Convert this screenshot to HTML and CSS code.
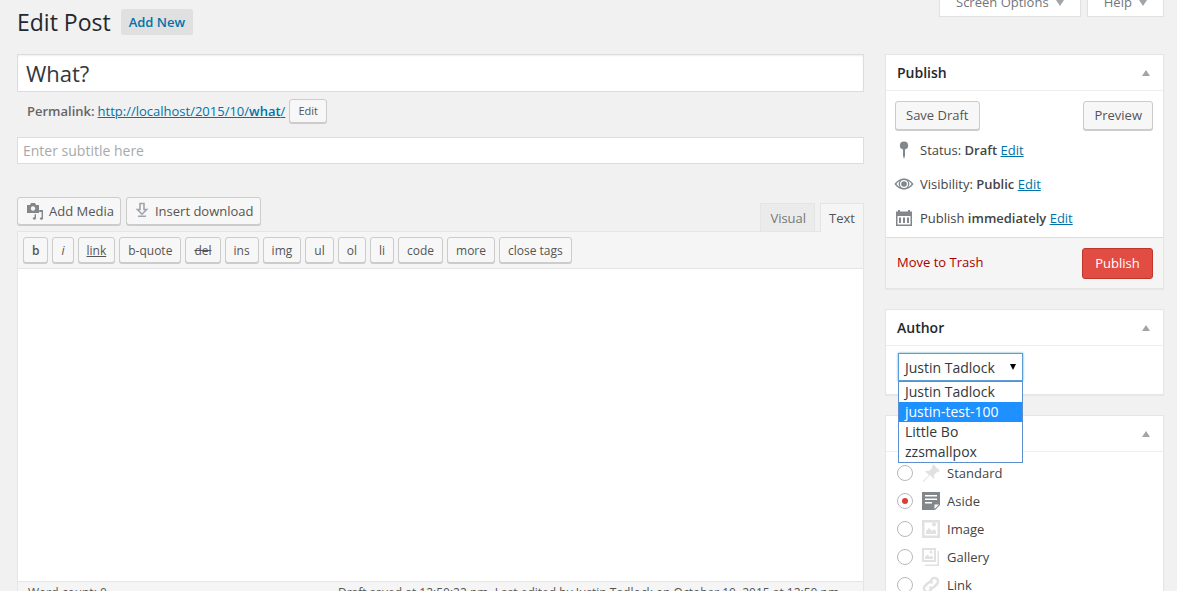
FILE: index.html
```html
<!DOCTYPE html>
<html lang="en">
  <head>
    <meta charset="UTF-8" />
    <title>Edit Post</title>
    <link rel="stylesheet" href="styles.css">
  </head>
  <body>
    <div class="screen-meta">
      <a class="meta-tab meta-tab-options" href="#">Screen Options <span class="meta-arrow"></span></a>
      <a class="meta-tab meta-tab-help" href="#">Help <span class="meta-arrow"></span></a>
    </div>
    <div class="page-head">
      <h1>Edit Post</h1>
      <a class="add-new" href="#">Add New</a>
    </div>
    <div class="columns">
      <div class="main-col">
        <div class="title-input">What?</div>
        <div class="permalink">
          <strong>Permalink:</strong>
          <a href="#">http://localhost/2015/10/<b>what</b>/</a>
          <span class="btn btn-small">Edit</span>
        </div>
        <div class="subtitle-input">Enter subtitle here</div>
        <div class="media-row">
          <span class="btn btn-media">
            <svg class="media-icon" width="18" height="18" viewBox="0 0 18 18">
              <path fill="#82878c" d="M1 3h3l1-2h4l1 2h3v8H1z"/>
              <circle cx="7" cy="6.500" r="2.200" fill="#f7f7f7"/>
              <path fill="#82878c" d="M17 8v8.200c0 1-.8 1.600-1.800 1.600-.8 0-1.400-.5-1.400-1.200s.7-1.200 1.500-1.200l.3.020V10h-2.400V8zM10 12.200v3.900c0 1-.8 1.700-1.700 1.700-.8 0-1.500-.5-1.500-1.200s.7-1.300 1.500-1.300l.3.030v-3.100z"/>
            </svg>
            Add Media
          </span>
          <span class="btn btn-media btn-download">
            <svg class="download-icon" width="14" height="16" viewBox="0 0 14 16">
              <path fill="none" stroke="#a0a5aa" stroke-width="1.600" d="M5 1.500h4v6h2.600L7 12.200 2.400 7.500H5z"/>
              <path fill="#a0a5aa" d="M3 13.500h8V15H3z"/>
            </svg>
            Insert download
          </span>
          <div class="editor-tabs">
            <span class="tab">Visual</span>
            <span class="tab tab-active">Text</span>
          </div>
        </div>
        <div class="editor">
          <div class="quicktags">
            <span class="qt qt-b">b</span>
            <span class="qt qt-i">i</span>
            <span class="qt qt-link">link</span>
            <span class="qt">b-quote</span>
            <span class="qt qt-del">del</span>
            <span class="qt">ins</span>
            <span class="qt">img</span>
            <span class="qt">ul</span>
            <span class="qt">ol</span>
            <span class="qt">li</span>
            <span class="qt">code</span>
            <span class="qt">more</span>
            <span class="qt">close tags</span>
          </div>
          <div class="editor-area"></div>
          <div class="editor-foot">
            <span>Word count: 0</span>
            <span>Draft saved at 12:50:22 pm. Last edited by Justin Tadlock on October 10, 2015 at 12:50 pm</span>
          </div>
        </div>
      </div>

      <div class="side-col">
        <div class="box">
          <div class="box-head"><h2>Publish</h2><span class="box-toggle"></span></div>
          <div class="publish-actions">
            <span class="btn btn-big">Save Draft</span>
            <span class="btn btn-big">Preview</span>
          </div>
          <div class="pub-row">
            <svg class="pub-icon" width="20" height="20" viewBox="0 0 20 20">
              <path fill="#82878c" d="M10 1.500a4 4 0 0 1 1 7.900V16l-1 3-1-3V9.400a4 4 0 0 1 1-7.900z"/>
            </svg>
            <span>Status: <b>Draft</b> <a href="#">Edit</a></span>
          </div>
          <div class="pub-row">
            <svg class="pub-icon" width="20" height="20" viewBox="0 0 20 20">
              <path fill="#82878c" d="M10 4.500c4 0 7.500 2.500 9.500 5.500-2 3-5.500 5.500-9.500 5.500S2.500 13 .5 10c2-3 5.500-5.500 9.500-5.500zM10 6a4 4 0 1 0 0 8 4 4 0 0 0 0-8zM2.300 10c1 1.300 2.200 2.400 3.500 3.200A5.500 5.500 0 0 1 5.800 6.800 11 11 0 0 0 2.300 10zm15.400 0a11 11 0 0 0-3.500-3.200 5.500 5.500 0 0 1 0 6.400c1.300-.8 2.500-1.900 3.500-3.200z"/>
              <circle cx="10" cy="10" r="2.800" fill="#82878c"/>
            </svg>
            <span>Visibility: <b>Public</b> <a href="#">Edit</a></span>
          </div>
          <div class="pub-row">
            <svg class="pub-icon" width="20" height="20" viewBox="0 0 20 20">
              <path fill="#82878c" d="M2 3.500h2V2h2v1.500h8V2h2v1.500h2V18H2zM3.500 8v8.500h13V8zM5 9.500h2v5.500H5zm4 0h2v5.500H9zm4 0h2v5.500h-2z"/>
            </svg>
            <span>Publish <b>immediately</b> <a href="#">Edit</a></span>
          </div>
          <div class="major-actions">
            <a class="trash" href="#">Move to Trash</a>
            <span class="btn-publish">Publish</span>
          </div>
        </div>

        <div class="box box-author">
          <div class="box-head"><h2>Author</h2><span class="box-toggle"></span></div>
          <div class="author-body">
            <div class="select-box">Justin Tadlock<span class="select-arrow"></span></div>
            <ul class="select-list">
              <li>Justin Tadlock</li>
              <li class="selected">justin-test-100</li>
              <li>Little Bo</li>
              <li>zzsmallpox</li>
            </ul>
          </div>
        </div>

        <div class="box box-format">
          <div class="box-head"><span class="box-toggle"></span></div>
          <div class="format-list">
            <div class="format-row">
              <span class="radio"></span>
              <svg class="format-icon" width="20" height="20" viewBox="0 0 20 20">
                <path fill="#e1e1e1" d="M12 1l7 7-1.500 1-1-.5-3.500 3.500c.5 1.500.2 3-.5 4L9 12l-6 6.500-1.500 1L2 18l6-6-4-3.500c1-.7 2.500-1 4-.5l3.500-3.500-.5-1z"/>
              </svg>
              <span>Standard</span>
            </div>
            <div class="format-row">
              <span class="radio radio-on"></span>
              <svg class="format-icon" width="20" height="20" viewBox="0 0 20 20">
                <path fill="#82878c" d="M1 1h18v13l-5 5H1zm3 3v1.500h12V4zm0 3.500V9h12V7.500zM4 11v1.500h7V11zm9.500 2.500V18l4.500-4.500z"/>
              </svg>
              <span>Aside</span>
            </div>
            <div class="format-row">
              <span class="radio"></span>
              <svg class="format-icon" width="20" height="20" viewBox="0 0 20 20">
                <path fill="#e1e1e1" d="M1 1h18v18H1zm2.500 2.500v13h13v-13zM5 15v-3l3-3 3 3 2-2 2 2v3zm8-7.500a2 2 0 1 1 0-4 2 2 0 0 1 0 4z"/>
              </svg>
              <span>Image</span>
            </div>
            <div class="format-row">
              <span class="radio"></span>
              <svg class="format-icon" width="20" height="20" viewBox="0 0 20 20">
                <path fill="#e1e1e1" d="M1 1h14v14H1zm2 2v10h10V3zM4 12v-2l2.500-2.500L9 10l1.500-1.500L12 10v2zm6-5.500a1.500 1.500 0 1 1 0-3 1.500 1.500 0 0 1 0 3zM16.500 4H18v15H4v-1.500h12.500z"/>
              </svg>
              <span>Gallery</span>
            </div>
            <div class="format-row">
              <span class="radio"></span>
              <svg class="format-icon" width="20" height="20" viewBox="0 0 20 20">
                <path fill="none" stroke="#e1e1e1" stroke-width="2.500" d="M9 7l2-3a3.500 3.500 0 0 1 5 5l-3 3a3.500 3.500 0 0 1-4.500 0M11 13l-2 3a3.500 3.500 0 0 1-5-5l3-3a3.500 3.500 0 0 1 4.500 0"/>
              </svg>
              <span>Link</span>
            </div>
          </div>
        </div>
      </div>
    </div>
  </body>
</html>
```

FILE: styles.css
```css
html, body {
  height: 591px;
  overflow: hidden;
}
body {
  margin: 0;
  background-color: #f1f1f1;
  color: #444;
  font-family: "Open Sans", sans-serif;
  font-size: 13px;
  line-height: 20px;
}
a {
  color: #0073aa;
}

/* top tabs, cut off by the window */
.screen-meta {
  display: flex;
  justify-content: flex-end;
  align-items: flex-end;
  gap: 6px;
  height: 17px;
  padding-right: 13px;
  overflow: hidden;
}
.meta-tab {
  display: block;
  height: 28px;
  line-height: 26px;
  box-sizing: border-box;
  background-color: #fff;
  border: 1px solid #e1e1e1;
  border-top: 0;
  box-shadow: 0 1px 1px rgba(0, 0, 0, 0.04);
  color: #72777c;
  text-decoration: none;
  text-align: center;
}
.meta-tab-options {
  width: 142px;
}
.meta-tab-help {
  width: 77px;
}
.meta-arrow {
  display: inline-block;
  margin-left: 4px;
  border-left: 4px solid transparent;
  border-right: 4px solid transparent;
  border-top: 6px solid #a0a5aa;
  vertical-align: 1px;
}

.page-head {
  display: flex;
  align-items: center;
  height: 26px;
  margin: -8px 0 0 17px;
}
.page-head h1 {
  margin: 0;
  color: #23282d;
  font-size: 23px;
  font-weight: 400;
  line-height: 26px;
}
.add-new {
  margin-left: 10px;
  padding: 0 8px;
  height: 26px;
  line-height: 26px;
  background-color: #e0e0e0;
  border-radius: 2px;
  font-weight: 600;
  text-decoration: none;
  font-size: 13px;
}

.columns {
  display: flex;
  gap: 21px;
  margin: 19px 13px 0 17px;
}
.main-col {
  width: 847px;
  flex-shrink: 0;
}
.side-col {
  width: 279px;
  flex-shrink: 0;
}

.title-input {
  height: 38px;
  box-sizing: border-box;
  padding-left: 8px;
  background-color: #fff;
  border: 1px solid #ddd;
  box-shadow: inset 0 1px 2px rgba(0, 0, 0, 0.07);
  color: #32373c;
  font-size: 22px;
  line-height: 37px;
}
.permalink {
  display: flex;
  align-items: center;
  height: 26px;
  margin-top: 6px;
  padding-left: 10px;
  color: #666;
}
.permalink strong {
  font-weight: 600;
  margin-right: 3px;
}
.permalink a b {
  font-weight: 600;
}
.subtitle-input {
  height: 27px;
  box-sizing: border-box;
  margin-top: 13px;
  padding-left: 5px;
  background-color: #fff;
  border: 1px solid #ddd;
  color: #a9a9a9;
  font-size: 14px;
  line-height: 25px;
}

.btn {
  display: inline-block;
  box-sizing: border-box;
  background-color: #f7f7f7;
  border: 1px solid #ccc;
  border-radius: 3px;
  box-shadow: 0 1px 0 #ccc;
  color: #555;
  white-space: nowrap;
}
.btn-small {
  height: 24px;
  margin-left: 4px;
  padding: 0 8px;
  font-size: 11px;
  line-height: 22px;
}

.media-row {
  display: flex;
  align-items: flex-start;
  gap: 5px;
  height: 34px;
  margin-top: 33px;
}
.btn-media {
  display: flex;
  align-items: center;
  height: 28px;
  padding: 0 6px 0 8px;
}
.media-icon {
  margin-right: 5px;
}
.download-icon {
  margin: -3px 6px 0 0;
}
.editor-tabs {
  display: flex;
  gap: 5px;
  margin: 6px 0 0 auto;
}
.tab {
  height: 28px;
  box-sizing: border-box;
  padding: 0 8px 0 9px;
  background-color: #ebebeb;
  border: 1px solid #e4e4e4;
  border-bottom: 0;
  color: #777;
  line-height: 28px;
}
.tab-active {
  height: 29px;
  padding: 0 8px;
  background-color: #f5f5f5;
  color: #555;
}

.editor {
  border: 1px solid #e5e5e5;
  border-bottom: 0;
  background-color: #f5f5f5;
}
.quicktags {
  display: flex;
  gap: 4px;
  height: 37px;
  box-sizing: border-box;
  padding: 5px 0 0 5px;
  border-bottom: 1px solid #e5e5e5;
}
.qt {
  height: 26px;
  box-sizing: border-box;
  padding: 0 8px;
  background-color: #f7f7f7;
  border: 1px solid #ccc;
  border-radius: 3px;
  box-shadow: 0 1px 0 #ccc;
  color: #555;
  font-size: 12px;
  line-height: 25px;
}
.qt-b {
  font-weight: 600;
}
.qt-i {
  font-style: italic;
}
.qt-link {
  text-decoration: underline;
}
.qt-del {
  text-decoration: line-through;
}
.editor-area {
  height: 312px;
  background-color: #fff;
}
.editor-foot {
  display: flex;
  justify-content: space-between;
  height: 26px;
  padding: 3px 24px 0 10px;
  border-top: 1px solid #e5e5e5;
  color: #555;
  font-size: 12px;
  line-height: 16px;
}

.box {
  background-color: #fff;
  border: 1px solid #e5e5e5;
  box-shadow: 0 1px 1px rgba(0, 0, 0, 0.04);
}
.box-author,
.box-format {
  margin-top: 20px;
}
.box-head {
  display: flex;
  align-items: center;
  height: 36px;
  box-sizing: border-box;
  padding: 0 12px 0 11px;
  border-bottom: 1px solid #eee;
}
.box-head h2 {
  margin: 0;
  color: #23282d;
  font-size: 14px;
  font-weight: 600;
}
.box-toggle {
  margin: 0 1px 0 auto;
  border-left: 4px solid transparent;
  border-right: 4px solid transparent;
  border-bottom: 6px solid #a0a5aa;
}

.publish-actions {
  display: flex;
  justify-content: space-between;
  padding: 10px 10px 0 9px;
}
.btn-big {
  height: 29px;
  padding: 0 10px;
  line-height: 27px;
}
.pub-row {
  display: flex;
  align-items: center;
  height: 20px;
  margin-top: 14px;
  padding-left: 8px;
}
.pub-row:nth-child(3) {
  margin-top: 10px;
}
.pub-row b {
  font-weight: 600;
}
.pub-icon {
  width: 20px;
  margin-right: 6px;
}
.major-actions {
  display: flex;
  justify-content: space-between;
  align-items: center;
  height: 51px;
  box-sizing: border-box;
  margin-top: 9px;
  padding: 0 10px 0 11px;
  background-color: #f5f5f5;
  border-top: 1px solid #ddd;
}
.trash {
  margin-bottom: 2px;
  color: #a00;
  text-decoration: none;
}
.btn-publish {
  width: 71px;
  height: 31px;
  box-sizing: border-box;
  background-color: #e14d43;
  border: 1px solid #c0352c;
  border-radius: 3px;
  color: #fff;
  text-align: center;
  line-height: 29px;
}

.author-body {
  position: relative;
  height: 48px;
}
.select-box {
  position: absolute;
  left: 12px;
  top: 7px;
  width: 125px;
  height: 28px;
  box-sizing: border-box;
  padding-left: 6px;
  background-color: #fff;
  border: 1px solid #5b9dd9;
  box-shadow: 0 0 2px rgba(30, 140, 190, 0.8);
  color: #32373c;
  font-size: 14px;
  line-height: 27px;
}
.select-arrow {
  position: absolute;
  right: 6px;
  top: 10px;
  border-left: 3px solid transparent;
  border-right: 3px solid transparent;
  border-top: 6px solid #000;
}
.select-list {
  position: absolute;
  left: 12px;
  top: 35px;
  z-index: 2;
  width: 125px;
  box-sizing: border-box;
  margin: 0;
  padding: 0;
  list-style: none;
  background-color: #fff;
  border: 1px solid #5b8fd0;
  color: #32373c;
  font-size: 14px;
  line-height: 20px;
}
.select-list li {
  padding-left: 6px;
}
.select-list .selected {
  background-color: #1e90ff;
  color: #fff;
}

.format-list {
  padding-top: 11px;
}
.format-row {
  display: flex;
  align-items: center;
  height: 20px;
  margin-bottom: 8px;
  padding-left: 11px;
}
.radio {
  display: flex;
  align-items: center;
  justify-content: center;
  width: 16px;
  height: 16px;
  box-sizing: border-box;
  margin-right: 8px;
  background-color: #fff;
  border: 1px solid #b4b9be;
  border-radius: 50%;
}
.radio-on::before {
  content: "";
  width: 6px;
  height: 6px;
  background-color: #dd3d36;
  border-radius: 50%;
}
.format-icon {
  margin-right: 6px;
}
```
